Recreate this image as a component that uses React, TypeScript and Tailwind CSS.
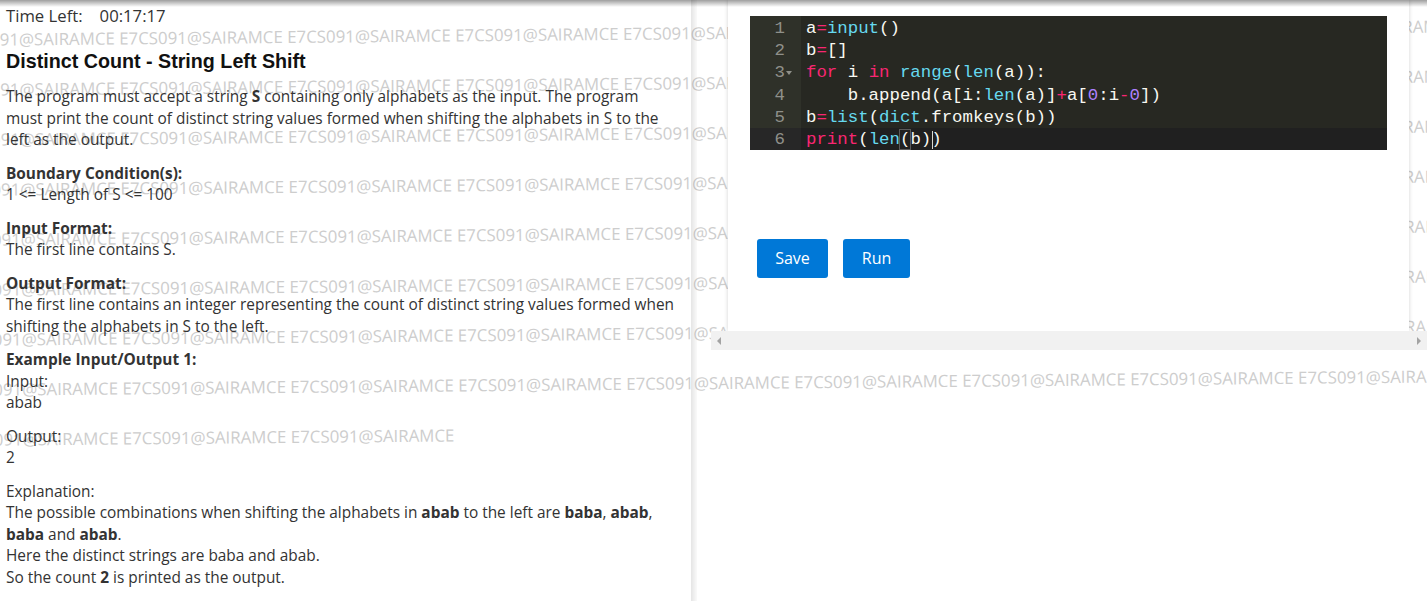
import React from "react";

const W = "#F8F8F2";
const P = "#F92672";
const C = "#66D9EF";
const N = "#AE81FF";

type Tok = [string, string];

const codeLines: Tok[][] = [
  [["a", W], ["=", P], ["input", C], ["()", W]],
  [["b", W], ["=", P], ["[]", W]],
  [["for", P], [" i ", W], ["in", P], [" ", W], ["range", C], ["(", W], ["len", C], ["(a)):", W]],
  [["    b.append(a[i:", W], ["len", C], ["(a)]", W], ["+", P], ["a[", W], ["0", N], [":i", W], ["-", P], ["0", N], ["])", W]],
  [["b", W], ["=", P], ["list", C], ["(", W], ["dict", C], [".fromkeys(b))", W]],
];

const WM_UNIT = "E7CS091@SAIRAMCE ";

function Watermark() {
  const rows = Array.from({ length: 9 });
  return (
    <div className="pointer-events-none absolute left-[-49px] top-[15px] z-0 origin-top-left rotate-[-0.52deg] whitespace-pre font-['Open_Sans',sans-serif] text-[16.85px] leading-[50px] text-[#cdcdcd]">
      {rows.map((_, i) => (
        <div key={i}>{i === 8 ? WM_UNIT.repeat(3).trim() : WM_UNIT.repeat(10)}</div>
      ))}
    </div>
  );
}

function CodeEditor() {
  return (
    <div className="flex h-[134.4px] overflow-hidden bg-[#272822] font-['Liberation_Mono',monospace] text-[17.4px] leading-[22.4px]">
      {/* gutter */}
      <div className="w-[51px] shrink-0 bg-[#2F3129] text-[#8F908A]">
        {[1, 2, 3, 4, 5, 6].map((n) => (
          <div key={n} className={"relative h-[22.4px] pr-[16px] pt-[1.5px] text-right " + (n === 6 ? "bg-[#272727]" : "")}>
            {n}
            {n === 3 && (
              <svg className="absolute right-[9px] top-[10px]" width="6" height="4" viewBox="0 0 6 4">
                <path d="M0 0 L6 0 L3 4 Z" fill="#8F908A" />
              </svg>
            )}
          </div>
        ))}
      </div>
      {/* code */}
      <div className="flex-1 whitespace-pre">
        {codeLines.map((line, i) => (
          <div key={i} className="h-[22.4px] pl-[5px] pt-[1.5px]">
            {line.map(([t, c], j) => (
              <span key={j} style={{ color: c }}>{t}</span>
            ))}
          </div>
        ))}
        <div className="relative h-[22.4px] bg-[#202020] pl-[5px] pt-[1.5px]">
          <span className="text-[#F92672]">print</span>
          <span className="text-[#F8F8F2]">(</span>
          <span className="text-[#66D9EF]">len</span>
          <span className="text-[#F8F8F2] outline outline-1 outline-[#5a5a5a]">(</span>
          <span className="text-[#F8F8F2]">b)</span>
          <span className="text-[#F8F8F2]">)</span>
          <span className="absolute left-[130.5px] top-[3px] h-[18px] w-[1px] bg-[#d8d8d0]" />
        </div>
      </div>
    </div>
  );
}

export default function App() {
  return (
    <div className="relative flex h-[601px] w-[1427px] overflow-hidden bg-white">
      <Watermark />
      <div className="pointer-events-none absolute left-0 right-0 top-0 z-30 h-[7px] bg-linear-to-b from-[rgba(0,0,0,0.38)] to-transparent" />

      {/* Question panel */}
      <div className="relative z-10 w-[691px] shrink-0 pl-[6px] pt-[5px] font-['Open_Sans',sans-serif] text-[15.4px] leading-[21.5px] text-[#333]">
        <div className="text-[16.7px] leading-[22px]">
          Time Left:<span className="ml-[17px]">00:17:17</span>
        </div>
        <h1 className="mt-[22px] font-['Liberation_Sans',Arial,sans-serif] text-[19.7px] font-bold leading-[24px] text-[#111]">
          Distinct Count - String Left Shift
        </h1>
        <p className="mt-[13px]">
          The program must accept a string <b>S</b> containing only alphabets as the input. The program
          <br />
          must print the count of distinct string values formed when shifting the alphabets in S to the
          <br />
          left as the output.
        </p>
        <div className="mt-[12px]">
          <p className="font-bold">Boundary Condition(s):</p>
          <p>1 &lt;= Length of S &lt;= 100</p>
        </div>
        <div className="mt-[12px]">
          <p className="font-bold">Input Format:</p>
          <p>The first line contains S.</p>
        </div>
        <div className="mt-[12px]">
          <p className="font-bold">Output Format:</p>
          <p>
            The first line contains an integer representing the count of distinct string values formed when
            <br />
            shifting the alphabets in S to the left.
          </p>
        </div>
        <div className="mt-[12px]">
          <p className="font-bold">Example Input/Output 1:</p>
          <p>Input:</p>
          <p>abab</p>
        </div>
        <div className="mt-[12px]">
          <p>Output:</p>
          <p>2</p>
        </div>
        <div className="mt-[12px]">
          <p>Explanation:</p>
          <p>
            The possible combinations when shifting the alphabets in <b>abab</b> to the left are <b>baba</b>, <b>abab</b>,
            <br />
            <b>baba</b> and <b>abab</b>.
          </p>
          <p>Here the distinct strings are baba and abab.</p>
          <p>
            So the count <b>2</b> is printed as the output.
          </p>
        </div>
      </div>

      {/* splitter */}
      <div className="relative z-10 w-[6px] shrink-0 bg-linear-to-r from-[rgba(0,0,0,0.1)] to-[rgba(0,0,0,0.02)]" />

      {/* Editor panel */}
      <div className="relative z-10 w-[730px] shrink-0 pl-[14px]">
        <div className="ml-[17px] h-[331px] w-[681px] bg-white px-[22px] pt-[16px] shadow-[0_0_4px_rgba(0,0,0,0.18)]">
          <CodeEditor />
          <div className="ml-[7px] mt-[88.6px] flex gap-[15px] font-['Open_Sans',sans-serif] text-[16px] text-white">
            <button className="h-[39px] w-[71px] rounded-[3px] bg-[#0078d7]">Save</button>
            <button className="h-[39px] w-[67px] rounded-[3px] bg-[#0078d7]">Run</button>
          </div>
        </div>
        <div className="flex h-[19px] items-center justify-between bg-[#f1f1f1] px-[6px]">
          <svg width="4" height="8" viewBox="0 0 4 8">
            <path d="M4 0 L0 4 L4 8 Z" fill="#a3a3a3" />
          </svg>
          <svg width="4" height="8" viewBox="0 0 4 8">
            <path d="M0 0 L4 4 L0 8 Z" fill="#a3a3a3" />
          </svg>
        </div>
      </div>
    </div>
  );
}
